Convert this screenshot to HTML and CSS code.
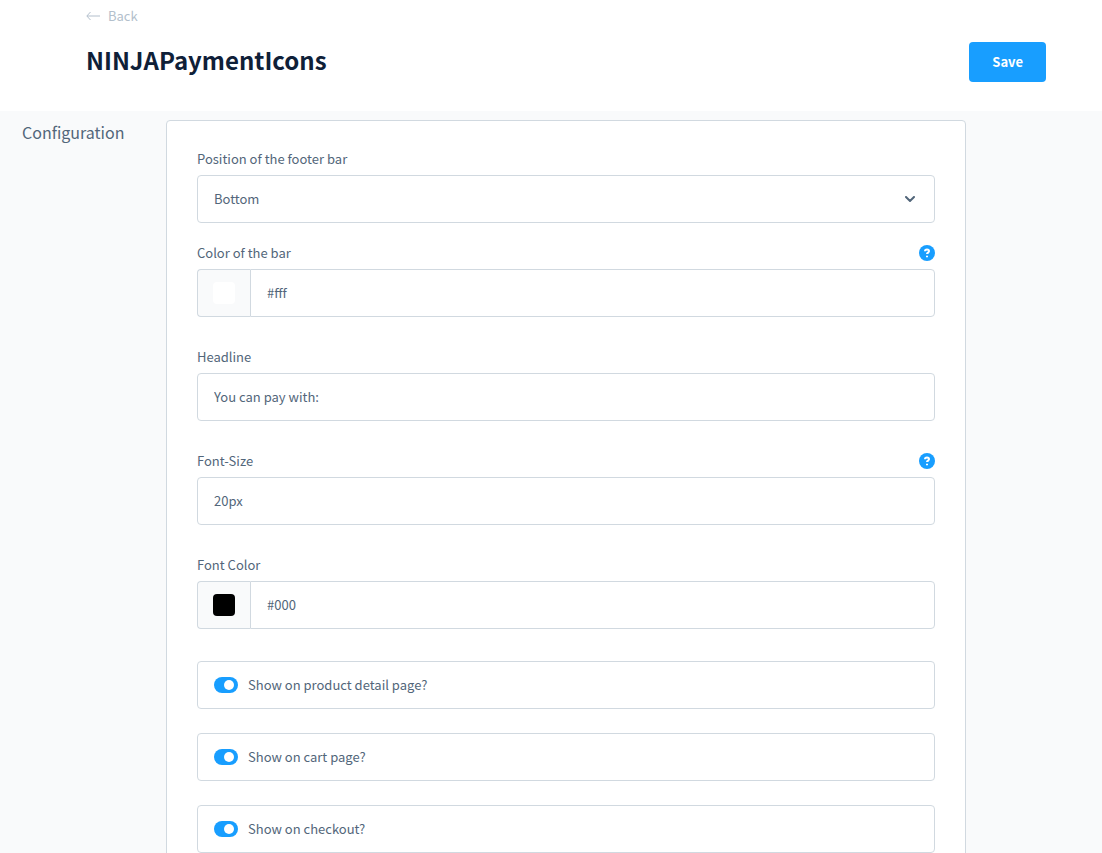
FILE: index.html
```html
<!DOCTYPE html>
<html lang="en">
<head>
<meta charset="utf-8">
<title>NINJAPaymentIcons</title>
<link rel="stylesheet" href="styles.css">
</head>
<body>
<header class="page-header">
  <a class="back" href="#">
    <svg class="back-icon" viewBox="0 0 14 10" aria-hidden="true"><path d="M14 5H1M4.500 1L.8 5l3.700 4"/></svg>
    Back
  </a>
  <div class="title-row">
    <h1 class="title">NINJAPaymentIcons</h1>
    <button class="save" type="submit" form="config">Save</button>
  </div>
</header>
<main class="content">
  <h2 class="section-title">Configuration</h2>
  <form class="card" id="config">
    <div class="field field-select">
      <div class="field-head"><label for="position">Position of the footer bar</label></div>
      <div class="select-wrap">
        <select class="control" id="position">
          <option>Bottom</option>
          <option>Top</option>
        </select>
        <svg class="chevron" viewBox="0 0 10 6" aria-hidden="true"><path d="M1 1l4 4 4-4"/></svg>
      </div>
    </div>
    <div class="field">
      <div class="field-head">
        <label for="bar-color">Color of the bar</label>
        <button class="help" type="button" aria-label="Help"><svg viewBox="0 0 16 16" aria-hidden="true"><circle cx="8" cy="8" r="8"/><path d="M6 6.300C6 5.100 6.900 4.500 8 4.500s2 .6 2 1.700c0 1.300-2 1.500-2 2.900M8 10.700v1.500"/></svg></button>
      </div>
      <div class="color-row">
        <span class="color-prefix"><button class="swatch swatch-white" type="button" aria-label="Pick bar color"></button></span>
        <input class="control" id="bar-color" type="text" value="#fff">
      </div>
    </div>
    <div class="field">
      <div class="field-head"><label for="headline">Headline</label></div>
      <input class="control" id="headline" type="text" value="You can pay with:">
    </div>
    <div class="field">
      <div class="field-head">
        <label for="font-size">Font-Size</label>
        <button class="help" type="button" aria-label="Help"><svg viewBox="0 0 16 16" aria-hidden="true"><circle cx="8" cy="8" r="8"/><path d="M6 6.300C6 5.100 6.900 4.500 8 4.500s2 .6 2 1.700c0 1.300-2 1.500-2 2.900M8 10.700v1.500"/></svg></button>
      </div>
      <input class="control" id="font-size" type="text" value="20px">
    </div>
    <div class="field">
      <div class="field-head"><label for="font-color">Font Color</label></div>
      <div class="color-row">
        <span class="color-prefix"><button class="swatch swatch-black" type="button" aria-label="Pick font color"></button></span>
        <input class="control" id="font-color" type="text" value="#000">
      </div>
    </div>
    <label class="switch-field"><input class="switch" type="checkbox" checked>Show on product detail page?</label>
    <label class="switch-field"><input class="switch" type="checkbox" checked>Show on cart page?</label>
    <label class="switch-field"><input class="switch" type="checkbox" checked>Show on checkout?</label>
  </form>
</main>
</body>
</html>
```
FILE: styles.css
```css
* {
  box-sizing: border-box;
}

body {
  margin: 0;
  height: 100vh;
  display: flex;
  flex-direction: column;
  background: #fff;
  color: #52667a;
  font-family: "Noto Sans CJK SC", "Noto Sans", sans-serif;
  font-size: 13px;
  line-height: 16px;
}

button,
input,
select {
  font: inherit;
  color: inherit;
}

.page-header {
  flex: none;
  padding: 8px 56px 29px 86px;
}

.back {
  display: inline-flex;
  align-items: center;
  gap: 8px;
  color: #b3bfcc;
  text-decoration: none;
}

.back-icon {
  width: 14px;
  height: 10px;
  fill: none;
  stroke: currentColor;
}

.title-row {
  display: flex;
  align-items: flex-start;
  justify-content: space-between;
  margin-top: 18px;
}

.title {
  margin: 0;
  color: #0f2038;
  font-size: 24px;
  font-weight: 700;
  line-height: 36px;
}

.save {
  height: 40px;
  padding: 0 23px;
  border: 0;
  border-radius: 4px;
  background: #189eff;
  color: #fff;
  font-weight: 700;
}

.content {
  flex: 1;
  min-height: 0;
  overflow-y: auto;
  scrollbar-width: none;
  display: grid;
  grid-template-columns: 144px minmax(0, 800px);
  align-items: start;
  padding: 9px 22px 24px;
  background: #f9fafb;
}

.section-title {
  margin: 0;
  font-size: 16px;
  font-weight: 400;
  line-height: 24px;
}

.card {
  padding: 30px;
  border: 1px solid #d1d9e0;
  border-radius: 4px;
  background: #fff;
}

.field {
  margin-bottom: 32px;
}

.field-select {
  margin-bottom: 22px;
}

.field-head {
  display: flex;
  align-items: center;
  justify-content: space-between;
  margin-bottom: 8px;
}

.help {
  width: 16px;
  height: 16px;
  padding: 0;
  border: 0;
  background: none;
}

.help svg {
  display: block;
  fill: #189eff;
}

.help path {
  fill: none;
  stroke: #fff;
  stroke-width: 2;
}

.control {
  display: block;
  width: 100%;
  height: 48px;
  padding: 0 16px;
  border: 1px solid #d1d9e0;
  border-radius: 4px;
  background: #fff;
  appearance: none;
}

input.control {
  padding-bottom: 2px;
}

.select-wrap {
  display: grid;
  align-items: center;
}

.select-wrap > * {
  grid-area: 1 / 1;
}

.chevron {
  justify-self: end;
  width: 10px;
  height: 6px;
  margin-right: 20px;
  fill: none;
  stroke: #52667a;
  stroke-width: 2;
  stroke-linecap: round;
  pointer-events: none;
}

.color-row {
  display: flex;
}

.color-prefix {
  flex: none;
  display: grid;
  place-items: center;
  width: 53px;
  border: 1px solid #d1d9e0;
  border-right: 0;
  border-radius: 4px 0 0 4px;
  background: #f9fafb;
}

.color-row .control {
  border-radius: 0 4px 4px 0;
}

.swatch {
  width: 22px;
  height: 22px;
  padding: 0;
  border: 0;
  border-radius: 4px;
}

.swatch-white {
  background: #fff;
}

.swatch-black {
  background: #000;
}

.switch-field {
  display: flex;
  align-items: center;
  gap: 10px;
  height: 48px;
  margin-bottom: 24px;
  padding: 0 16px;
  border: 1px solid #d1d9e0;
  border-radius: 4px;
}

.switch {
  appearance: none;
  width: 24px;
  height: 16px;
  margin: 0;
  padding: 3px;
  border-radius: 8px;
  background: #d1d9e0;
}

.switch::before {
  content: "";
  display: block;
  width: 10px;
  height: 10px;
  border-radius: 50%;
  background: #fff;
}

.switch:checked {
  background: #189eff;
}

.switch:checked::before {
  margin-left: 7px;
}
```
